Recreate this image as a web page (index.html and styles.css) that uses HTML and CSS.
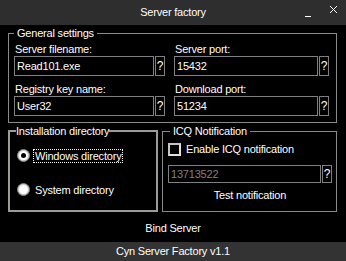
FILE: index.html
```html
<!DOCTYPE html>
<html>
<head>
  <title>Server factory</title>
  <link rel="stylesheet" href="styles.css">
</head>
<body>
  <div class="window">
    <div class="titlebar">
      <span></span>
      <span class="title">Server factory</span>
      <span class="controls">
        <svg class="ctl" width="8" height="10" viewBox="0 0 8 10"><path d="M1 9.5h6" stroke="#fff" stroke-width="1"/></svg>
        <svg class="ctl" width="9" height="9" viewBox="0 0 9 9"><path d="M1 1l7 7M8 1l-7 7" stroke="#fff" stroke-width="1"/></svg>
      </span>
    </div>

    <fieldset class="group general">
      <legend>General settings</legend>
      <div class="fields">
        <div class="field">
          <label>Server filename:</label>
          <div class="inrow"><input type="text" value="Read101.exe"><button class="help">?</button></div>
        </div>
        <div class="field">
          <label>Server port:</label>
          <div class="inrow"><input type="text" value="15432"><button class="help">?</button></div>
        </div>
        <div class="field">
          <label>Registry key name:</label>
          <div class="inrow"><input type="text" value="User32"><button class="help">?</button></div>
        </div>
        <div class="field">
          <label>Download port:</label>
          <div class="inrow"><input type="text" value="51234"><button class="help">?</button></div>
        </div>
      </div>
    </fieldset>

    <div class="lower">
      <fieldset class="group install">
        <legend>Installation directory</legend>
        <label class="radio-row"><input type="radio" name="dir" checked><span class="focus">Windows directory</span></label>
        <label class="radio-row second"><input type="radio" name="dir"><span>System directory</span></label>
      </fieldset>

      <fieldset class="group icq">
        <legend>ICQ Notification</legend>
        <label class="check-row"><input type="checkbox"><span>Enable ICQ notification</span></label>
        <div class="inrow small"><input type="text" value="13713522" disabled><button class="help">?</button></div>
        <button class="flat test">Test notification</button>
      </fieldset>
    </div>

    <button class="flat bind">Bind Server</button>

    <div class="statusbar">Cyn Server Factory v1.1</div>
  </div>
</body>
</html>
```

FILE: styles.css
```css
body {
  margin: 0;
  background: #000;
  color: #fff;
  font-family: "Liberation Sans", Arial, sans-serif;
  font-size: 11px;
  letter-spacing: -0.2px;
}
.window {
  width: 346px;
  height: 261px;
  display: flex;
  flex-direction: column;
}
.titlebar {
  height: 25px;
  background: #2e2e2e;
  display: grid;
  grid-template-columns: 1fr auto 1fr;
  align-items: center;
  line-height: 25px;
}
.controls {
  justify-self: end;
  display: flex;
  align-items: flex-start;
  gap: 17px;
  padding-right: 8px;
  height: 25px;
}
.ctl:first-child { margin-top: 7px; }
.ctl:last-child { margin-top: 5px; }

.group {
  margin: 0;
  border: 1px solid #8a8a8a;
  min-width: 0;
}
.group legend {
  padding: 0 3px;
  line-height: 14px;
}

.general {
  margin: 1px 9px 0 8px;
  padding: 2px 7px 6px 5px;
}
.fields {
  display: grid;
  grid-template-columns: 151px 155px;
  column-gap: 9px;
  row-gap: 6px;
}
.field label {
  display: block;
  line-height: 14px;
  padding-left: 1px;
}
.inrow {
  display: flex;
  gap: 1px;
  height: 20px;
}
.inrow input {
  flex: 1;
  min-width: 0;
  box-sizing: border-box;
  height: 100%;
  margin: 0;
  padding: 0 2px;
  border: 1px solid #808080;
  background: #000;
  color: #fff;
  font: inherit;
  letter-spacing: inherit;
  outline: none;
}
.inrow input:disabled { color: #808080; }
.help {
  width: 10px;
  padding: 0;
  border: 1px solid #808080;
  background: #000;
  color: #fff;
  font: inherit;
  font-size: 12px;
}

.lower {
  display: flex;
  gap: 4px;
  height: 88px;
  margin: 1px 9px 0 8px;
}
.install {
  width: 150px;
  box-sizing: border-box;
  border: 2px solid #9c9c94;
  padding: 10px 4px 0 6px;
}
.install legend { padding: 0; }
.radio-row {
  display: flex;
  align-items: center;
  height: 15px;
}
.radio-row.second { margin-top: 19px; }
.radio-row input {
  appearance: none;
  width: 13px;
  height: 13px;
  margin: 0 3px 0 1px;
  border-radius: 50%;
  border: 1px solid #808080;
  background: #fff;
  box-shadow: inset 0 0 0 1px #c8c8c8;
  position: relative;
}
.radio-row input:checked::after {
  content: "";
  position: absolute;
  left: 3px;
  top: 3px;
  width: 5px;
  height: 5px;
  border-radius: 50%;
  background: #000;
}
.radio-row span {
  padding: 0 1px;
  border: 1px dotted transparent;
  line-height: 12px;
}
.radio-row .focus { border-color: #fff; }

.icq {
  flex: 1;
  padding: 4px 4px 0 5px;
}
.icq legend { margin-left: 2px; }
.check-row {
  display: flex;
  align-items: center;
  gap: 5px;
  height: 14px;
}
.check-row input {
  appearance: none;
  width: 13px;
  height: 13px;
  margin: 0;
  box-sizing: border-box;
  border: 2px solid #c4c4c4;
  border-right-color: #e0e0e0;
  border-bottom-color: #e0e0e0;
  background: #000;
}
.inrow.small {
  height: 18px;
  margin-top: 9px;
}
.flat {
  display: block;
  background: none;
  border: none;
  padding: 0;
  color: #fff;
  font: inherit;
  letter-spacing: inherit;
  line-height: 14px;
}
.test {
  margin: 5px auto 0;
}
.bind {
  margin: 9px auto 0;
}
.statusbar {
  margin-top: auto;
  height: 19px;
  line-height: 19px;
  background: #333;
  text-align: center;
}
```
